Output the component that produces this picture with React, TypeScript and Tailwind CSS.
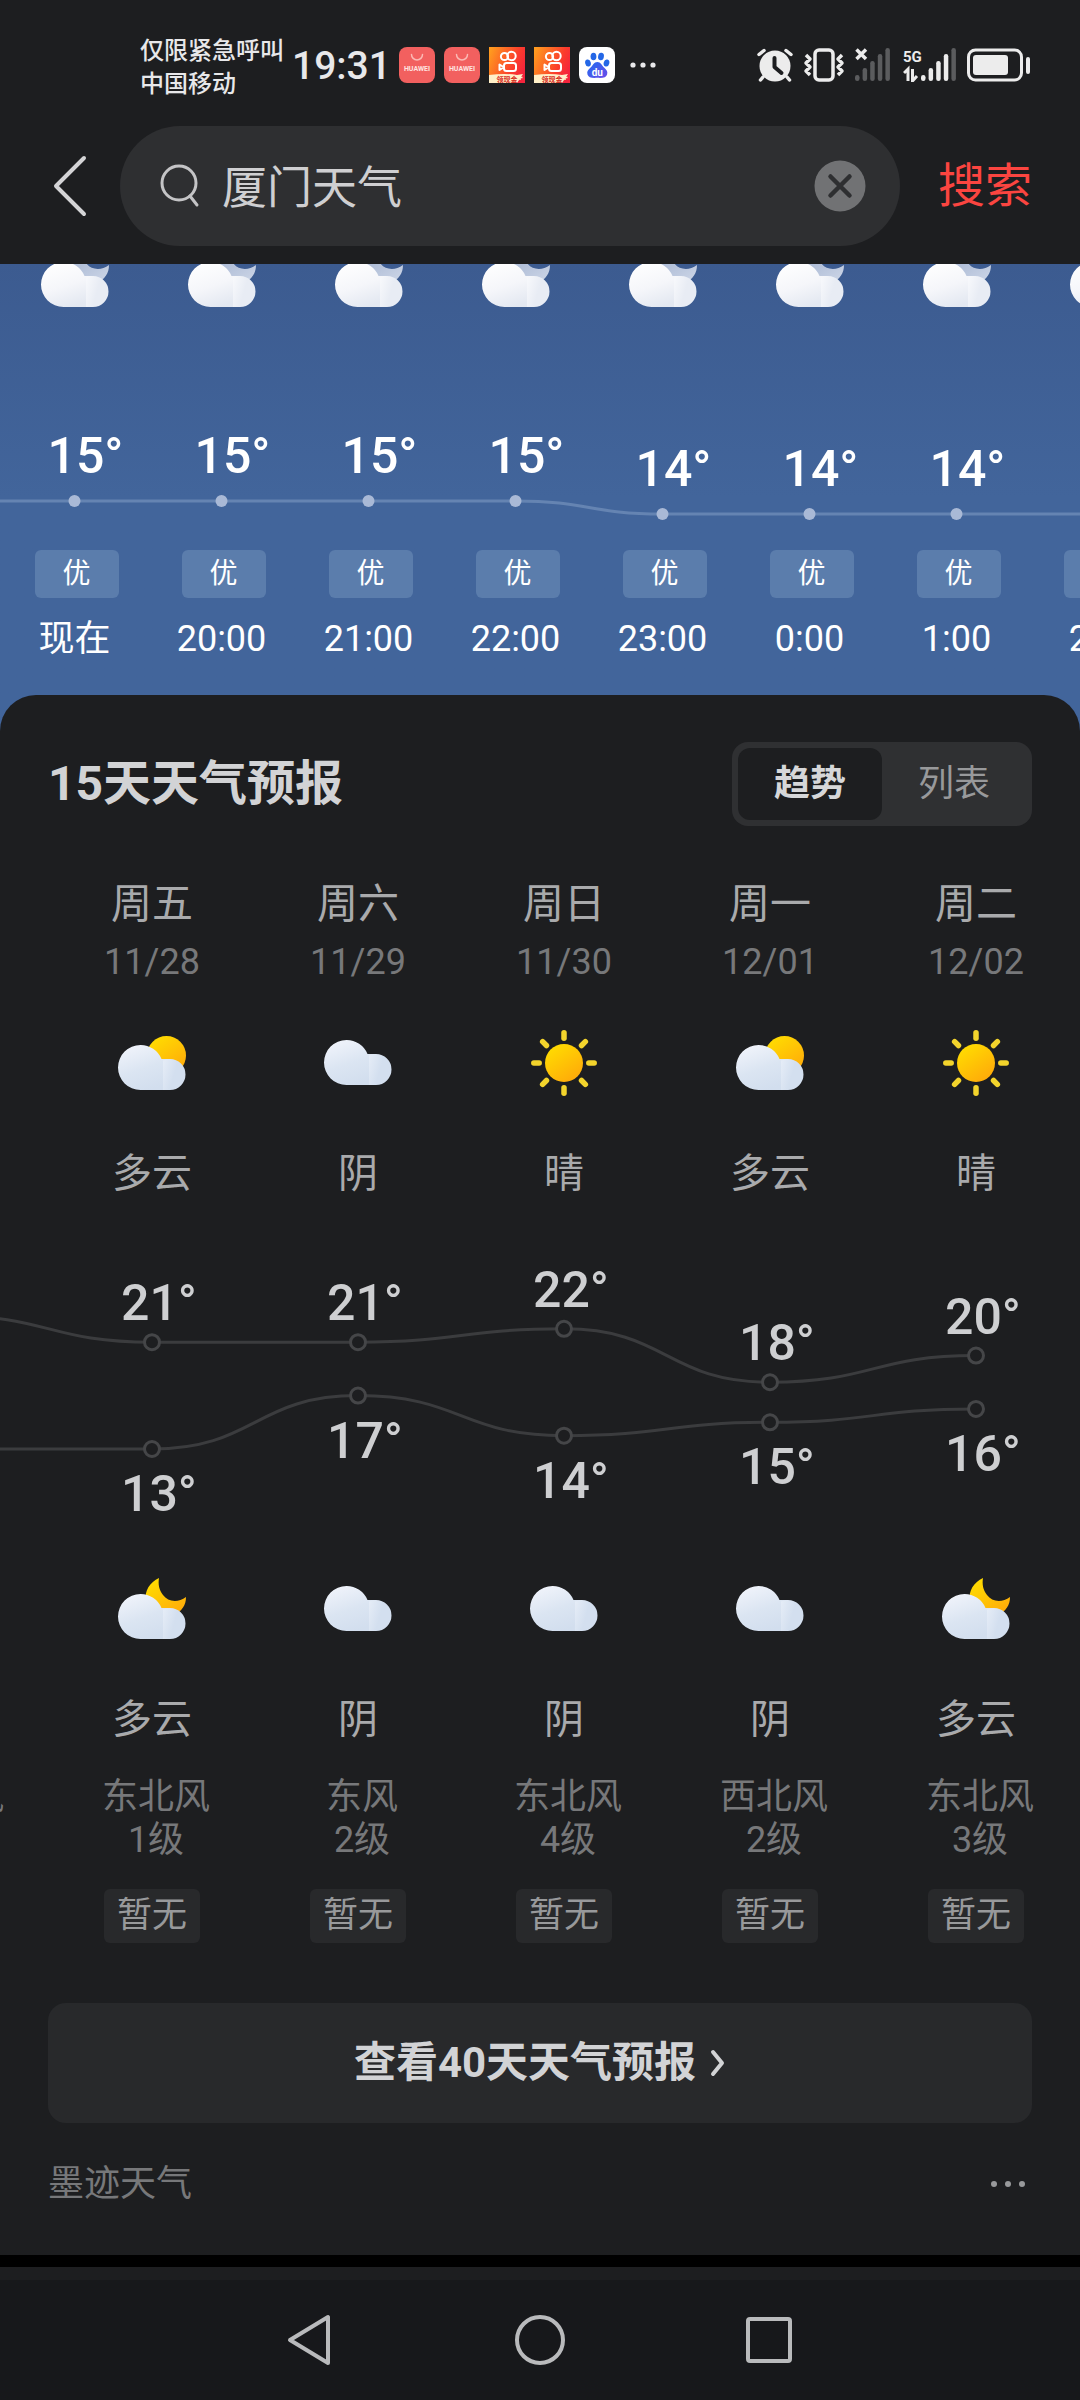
import { useId, useState, type ReactNode } from 'react'

type Icon = 'partly' | 'overcast' | 'sunny' | 'night'

const hours = [
  { time: '现在', temp: 15 },
  { time: '20:00', temp: 15 },
  { time: '21:00', temp: 15 },
  { time: '22:00', temp: 15 },
  { time: '23:00', temp: 14 },
  { time: '0:00', temp: 14 },
  { time: '1:00', temp: 14 },
  { time: '2:00', temp: 14 },
]

interface Day {
  week: string
  date: string
  day: Icon
  dayText: string
  high: number
  low: number
  night: Icon
  nightText: string
  wind: string
  level: string
}

const days: Day[] = [
  { week: '周四', date: '11/27', day: 'sunny', dayText: '晴', high: 23, low: 13, night: 'night', nightText: '多云', wind: '东北风', level: '2级' },
  { week: '周五', date: '11/28', day: 'partly', dayText: '多云', high: 21, low: 13, night: 'night', nightText: '多云', wind: '东北风', level: '1级' },
  { week: '周六', date: '11/29', day: 'overcast', dayText: '阴', high: 21, low: 17, night: 'overcast', nightText: '阴', wind: '东风', level: '2级' },
  { week: '周日', date: '11/30', day: 'sunny', dayText: '晴', high: 22, low: 14, night: 'overcast', nightText: '阴', wind: '东北风', level: '4级' },
  { week: '周一', date: '12/01', day: 'partly', dayText: '多云', high: 18, low: 15, night: 'overcast', nightText: '阴', wind: '西北风', level: '2级' },
  { week: '周二', date: '12/02', day: 'sunny', dayText: '晴', high: 20, low: 16, night: 'night', nightText: '多云', wind: '东北风', level: '3级' },
]

const HOUR_W = 147
const DAY_W = 206

// 平滑曲线，每个点处切线水平
function smoothPath(points: [number, number][]) {
  return points
    .map(([x, y], i) => {
      if (i === 0) return `M${x} ${y}`
      const [px, py] = points[i - 1]
      const mid = (px + x) / 2
      return `C${mid} ${py} ${mid} ${y} ${x} ${y}`
    })
    .join('')
}

function Cloud({ id, y, light }: { id: string; y: number; light?: boolean }) {
  return (
    <g transform={`translate(0 ${y})`}>
      <defs>
        <linearGradient id={id} x1="0.2" y1="0" x2="0.6" y2="1">
          <stop offset="0" stopColor={light ? '#ffffff' : '#f1f4fb'} />
          <stop offset="0.55" stopColor={light ? '#f5f6fa' : '#dbe5f2'} />
          <stop offset="1" stopColor={light ? '#e3e8f1' : '#d2deee'} />
        </linearGradient>
        <linearGradient id={`${id}s`} x1="0" y1="0" x2="1" y2="0.4">
          <stop offset="0" stopColor={light ? '#f8f9fc' : '#e6edf7'} />
          <stop offset="0.6" stopColor={light ? '#e8ecf4' : '#d3dfef'} />
        </linearGradient>
      </defs>
      <path d="M22.500 0A22.500 22.500 0 0 0 22.500 45H52V14H43.500A22.500 22.500 0 0 0 22.500 0Z" fill={`url(#${id})`} />
      <path d="M45 15.600A15.500 15.500 0 0 1 52 14A15.500 15.500 0 0 1 52 45H45Z" fill={`url(#${id}s)`} />
    </g>
  )
}

function WeatherIcon({ name, pale }: { name: Icon; pale?: boolean }) {
  const id = useId()
  const gold = `${id}g`
  return (
    <svg viewBox="0 0 68 66" className="h-[66px] w-[68px]" aria-hidden="true">
      <defs>
        <linearGradient id={gold} x1="0.1" y1="0" x2="0.8" y2="1">
          <stop offset="0" stopColor={pale ? '#9fb0cf' : '#ffe000'} />
          <stop offset="1" stopColor={pale ? '#ccd5e6' : '#ffa80a'} />
        </linearGradient>
      </defs>
      {name === 'sunny' && (
        <>
          <circle cx="34" cy="33" r="19" fill={`url(#${gold})`} />
          {[0, 45, 90, 135, 180, 225, 270, 315].map(deg => (
            <path key={deg} d="M34 2.800V8.200" stroke="#f3d42c" strokeWidth="5.500" strokeLinecap="round" transform={`rotate(${deg} 34 33)`} />
          ))}
        </>
      )}
      {name === 'overcast' && <Cloud id={id} y={10} />}
      {name === 'partly' && (
        <>
          <circle cx="48.500" cy="25.500" r="19.500" fill={`url(#${gold})`} />
          <Cloud id={id} y={15} />
        </>
      )}
      {name === 'night' && (
        <>
          <path d="M41 2C32 6 26 15 28 25C30 37 44 45 56 39C64 35 68 29 68 21C60 27 50 26 45 19C41 14 40 8 41 2Z" fill={`url(#${gold})`} />
          <Cloud id={id} y={18} light={pale} />
        </>
      )}
    </svg>
  )
}

function HuaweiIcon() {
  return (
    <svg viewBox="0 0 36 36" className="size-9" aria-hidden="true">
      <rect width="36" height="36" rx="8" fill="#f2605f" />
      <path d="M12.500 7.500a5.500 5.500 0 0 0 11 0" fill="none" stroke="#fbb9b4" strokeWidth="1.500" strokeLinecap="round" />
      <text x="18" y="24" textAnchor="middle" fontSize="7" fontWeight="700" fill="#ffe3e0">HUAWEI</text>
    </svg>
  )
}

function KuaishouIcon() {
  const id = useId()
  return (
    <svg viewBox="0 0 36 36" className="size-9" aria-hidden="true">
      <defs>
        <linearGradient id={id} x1="0" y1="0.200" x2="1" y2="0.600">
          <stop offset="0" stopColor="#ff9a1f" />
          <stop offset="0.700" stopColor="#fb3c2c" />
          <stop offset="1" stopColor="#f5243c" />
        </linearGradient>
      </defs>
      <rect width="36" height="36" fill={`url(#${id})`} />
      <g fill="none" stroke="#fff" strokeWidth="2">
        <circle cx="15.500" cy="9.500" r="3.600" />
        <circle cx="22.500" cy="9" r="4.200" />
        <rect x="15" y="16" width="12" height="8" rx="2.500" />
        <path d="M14.500 20l-4-2.500v5.500l4-2.500" strokeLinejoin="round" />
      </g>
      <path d="M0 28Q16 26 28 28L34 27L28 36H0Z" fill="#fff0c8" />
      <text x="18" y="35" textAnchor="middle" fontSize="7" fontWeight="700" fill="#d62a1c">领现金</text>
      <path d="M31 28v5M28.500 30.500h5" stroke="#fff0c8" strokeWidth="1.500" />
    </svg>
  )
}

function BaiduIcon() {
  const id = useId()
  return (
    <svg viewBox="0 0 36 36" className="size-9" aria-hidden="true">
      <defs>
        <linearGradient id={id} x1="0" y1="0" x2="1" y2="1">
          <stop offset="0" stopColor="#1f6cf0" />
          <stop offset="1" stopColor="#6a4be8" />
        </linearGradient>
      </defs>
      <rect width="36" height="36" rx="8" fill="#fff" />
      <g fill="#2467e6">
        <ellipse cx="9" cy="16" rx="2.800" ry="3.600" transform="rotate(-15 9 16)" />
        <ellipse cx="14.500" cy="9.500" rx="2.900" ry="3.800" />
        <ellipse cx="22" cy="9.500" rx="2.900" ry="3.800" transform="rotate(10 22 9.500)" />
        <ellipse cx="27.500" cy="16" rx="2.800" ry="3.600" transform="rotate(15 27.500 16)" />
      </g>
      <path d="M18.300 15c3.500 0 4.500 3.600 7 5.800 2.600 2.300 3.600 4 2.800 6.700-.900 3-4 3.700-9.800 3.300-5.800.400-8.900-.300-9.800-3.300-.800-2.700.200-4.400 2.800-6.700 2.500-2.200 3.500-5.800 7-5.800Z" fill={`url(#${id})`} />
      <text x="18.300" y="28.500" textAnchor="middle" fontSize="10" fontWeight="700" fill="#fff">du</text>
    </svg>
  )
}

function Signal({ active }: { active: number }) {
  const heights = [6, 13, 20, 27, 33]
  return (
    <g>
      {heights.map((h, i) => (
        <rect key={h} x={i * 7.6} y={33 - h} width="4.500" height={h} rx="2.200" fill={i < active ? '#ececec' : '#5b5c5e'} />
      ))}
    </g>
  )
}

function StatusBar() {
  return (
    <div className="flex h-[126px] items-center justify-between pt-1 pr-[49px] pl-[140px] text-[#e8e8ea]">
      <div className="flex items-center">
        <p className="pt-1.5 text-2xl leading-[33px] font-medium whitespace-nowrap">
          仅限紧急呼叫
          <br />
          中国移动
        </p>
        <time className="ml-2 pt-0.5 text-[39px] leading-none font-medium">19:31</time>
        <div className="ml-2 flex items-center gap-[9px]">
          <HuaweiIcon />
          <HuaweiIcon />
          <KuaishouIcon />
          <KuaishouIcon />
          <BaiduIcon />
        </div>
        <svg viewBox="0 0 28 6" className="ml-3.5 h-[6px] w-7" fill="currentColor" aria-hidden="true">
          <circle cx="4" cy="3" r="2.600" />
          <circle cx="14" cy="3" r="2.600" />
          <circle cx="24" cy="3" r="2.600" />
        </svg>
      </div>
      <div className="flex items-center">
        <svg viewBox="0 0 36 34" className="h-[34px] w-9" aria-hidden="true">
          <circle cx="18" cy="18" r="15.500" fill="#ececec" />
          <path d="M2 6.500L7 2.500M34 6.500L29 2.500M6 29L3.500 32M30 29L32.500 32" stroke="#ececec" strokeWidth="3.500" strokeLinecap="round" />
          <path d="M17.500 10V19L24.500 25" fill="none" stroke="#1d1e20" strokeWidth="4" strokeLinecap="round" strokeLinejoin="round" />
        </svg>
        <svg viewBox="0 0 42 34" className="ml-[10px] h-[34px] w-[42px]" fill="none" stroke="#ececec" aria-hidden="true">
          <rect x="12" y="2" width="18" height="30" rx="4" strokeWidth="3.500" />
          <path d="M3 7l4 4-4 4 4 4-4 4 4 4M39 7l-4 4 4 4-4 4 4 4-4 4" strokeWidth="3.500" strokeLinejoin="round" />
        </svg>
        <svg viewBox="0 0 36 34" className="ml-[10px] h-[34px] w-9" aria-hidden="true">
          <Signal active={0} />
          <path d="M1.500 1.500L11 11M11 1.500L1.500 11" stroke="#ececec" strokeWidth="3.500" />
        </svg>
        <svg viewBox="0 0 54 34" className="ml-3 h-[34px] w-[54px]" aria-hidden="true">
          <g transform="translate(18 0)">
            <Signal active={4} />
          </g>
          <text x="0" y="14" fontSize="15" fontWeight="700" fill="#ececec">5G</text>
          <path d="M1 25L5 21V33M9.500 21V33L14 28" fill="none" stroke="#ececec" strokeWidth="3" />
        </svg>
        <svg viewBox="0 0 64 34" className="ml-[10px] h-[34px] w-16" aria-hidden="true">
          <rect x="1.500" y="2" width="53" height="30" rx="7" fill="none" stroke="#ececec" strokeWidth="3" />
          <rect x="6" y="7" width="35" height="20" rx="3" fill="#ececec" />
          <rect x="59" y="9" width="4" height="17" rx="2" fill="#ececec" />
        </svg>
      </div>
    </div>
  )
}

function SearchBar() {
  const [keyword, setKeyword] = useState('厦门天气')
  return (
    <form className="flex items-center px-12 pb-[18px]" onSubmit={e => e.preventDefault()}>
      <button type="button" aria-label="返回" className="w-[72px] shrink-0">
        <svg viewBox="0 0 44 64" className="h-16 w-11" fill="none" stroke="#d4d4d6" strokeWidth="4" strokeLinecap="round" strokeLinejoin="round">
          <path d="M36 4L8 32L36 60" />
        </svg>
      </button>
      <div className="flex h-[120px] flex-1 items-center rounded-full bg-[#2e2f31] pr-[34px] pl-10">
        <svg viewBox="0 0 40 44" className="h-11 w-10 shrink-0" fill="none" stroke="#c4c4c6" strokeWidth="3" strokeLinecap="round" aria-hidden="true">
          <circle cx="19" cy="19" r="17" />
          <path d="M30 32L37 41" />
        </svg>
        <input
          aria-label="搜索"
          value={keyword}
          onChange={e => setKeyword(e.target.value)}
          className="ml-[22px] min-w-0 flex-1 bg-transparent pt-1.5 text-[45px] leading-[64px] text-[#cfcfd1] outline-none"
        />
        <button type="button" aria-label="清除" onClick={() => setKeyword('')} className="shrink-0">
          <svg viewBox="0 0 52 52" className="size-[52px]">
            <circle cx="26" cy="26" r="25.500" fill="#717274" />
            <path d="M16.500 16.500L35.500 35.500M35.500 16.500L16.500 35.500" stroke="#2e2f31" strokeWidth="4.500" strokeLinecap="round" />
          </svg>
        </button>
      </div>
      <button type="submit" className="ml-[38px] shrink-0 text-[47px] leading-[64px] text-[#fb4540]">搜索</button>
    </form>
  )
}

function HourlyForecast() {
  const points = hours.map((h, i) => [i * HOUR_W + HOUR_W / 2, (15 - h.temp) * 13 + 81] as [number, number])
  const width = hours.length * HOUR_W
  // 曲线向左延伸到屏幕边缘
  const line: [number, number][] = [[-HOUR_W / 2, 81], ...points, [width, points[points.length - 1][1]]]
  return (
    <section className="overflow-hidden bg-linear-to-b from-[#3c5b90] to-[#42659b] to-50% pb-[67px] pl-px">
      <div style={{ width }}>
        <ul className="-mt-5 flex">
          {hours.map(h => (
            <li key={h.time} className="flex flex-1 justify-center">
              <WeatherIcon name="night" pale />
            </li>
          ))}
        </ul>
        <svg viewBox={`0 0 ${width} 130`} width={width} height={130} className="mt-[110px] overflow-visible">
          <path d={smoothPath(line)} fill="none" stroke="#6584b2" strokeWidth="3" />
          {points.map(([x, y], i) => (
            <g key={i}>
              <circle cx={x} cy={y} r="6" fill="#a9b9d6" />
              <text x={x - 27} y={y - 28} fontSize="50" fontWeight="500" fill="#ffffff">{hours[i].temp}°</text>
            </g>
          ))}
        </svg>
        <ul className="flex">
          {hours.map(h => (
            <li key={h.time} className="flex flex-1 flex-col items-center text-white">
              <span className="ml-1 h-12 w-[84px] rounded-md bg-[#5b7dac] text-center text-[28px] leading-[48px]">优</span>
              <span className="mt-4 text-[36px] leading-[50px]">{h.time}</span>
            </li>
          ))}
        </ul>
      </div>
    </section>
  )
}

function TempChart() {
  const width = days.length * DAY_W
  const toY = (t: number) => 157 - (t - 13) * 13.35
  const highs = days.map((d, i) => [i * DAY_W + DAY_W / 2, toY(d.high)] as [number, number])
  const lows = days.map((d, i) => [i * DAY_W + DAY_W / 2, toY(d.low)] as [number, number])
  const series = [
    { points: highs, temps: days.map(d => d.high), dy: -22 },
    { points: lows, temps: days.map(d => d.low), dy: 62 },
  ]
  return (
    <svg viewBox={`0 0 ${width} 230`} width={width} height={230} className="overflow-visible">
      {series.map(({ points, temps, dy }) => (
        <g key={dy}>
          <path d={smoothPath(points)} fill="none" stroke="#3b3c3e" strokeWidth="3" />
          {points.map(([x, y], i) => (
            <g key={i}>
              <circle cx={x} cy={y} r="7.500" fill="#1d1e20" stroke="#454648" strokeWidth="3" />
              <text x={x - 31} y={y + dy} fontSize="50" fontWeight="500" fill="#cecfd1">{temps[i]}°</text>
            </g>
          ))}
        </g>
      ))}
    </svg>
  )
}

function DailyForecast() {
  const [mode, setMode] = useState<'trend' | 'list'>('trend')
  const tab = (value: 'trend' | 'list', label: ReactNode) => (
    <button
      type="button"
      aria-pressed={mode === value}
      onClick={() => setMode(value)}
      className={`h-[72px] w-36 rounded-xl text-[36px] leading-[68px] ${
        mode === value ? 'bg-[#1d1e20] font-bold text-[#d6d7d9]' : 'text-[#98999b]'
      }`}
    >
      {label}
    </button>
  )
  return (
    <section className="relative -mt-9 rounded-t-[36px] bg-[#1d1e20] pt-[47px] pb-[45px]">
      <div className="flex items-center justify-between px-12">
        <h2 className="text-[48px] leading-[84px] font-bold text-[#d2d3d5]">15天天气预报</h2>
        <div className="flex rounded-2xl bg-[#2f3032] p-[6px]">
          {tab('trend', '趋势')}
          {tab('list', '列表')}
        </div>
      </div>

      <div className="overflow-hidden">
        <div className="-ml-[157px]" style={{ width: days.length * DAY_W }}>
          <ul className="mt-[50px] flex">
            {days.map(d => (
              <li key={d.date} className="flex flex-1 flex-col items-center text-[#a9aaac]">
                <span className="text-[41px] leading-[56px]">{d.week}</span>
                <span className="mt-1.5 text-[36px] leading-[48px] text-[#77787a]">{d.date}</span>
                <span className="mt-11">
                  <WeatherIcon name={d.day} />
                </span>
                <span className="mt-[50px] text-[40px] leading-[56px]">{d.dayText}</span>
              </li>
            ))}
          </ul>
          <div className="mt-[90px]">
            <TempChart />
          </div>
          <ul className="mt-[54px] flex">
            {days.map(d => (
              <li key={d.date} className="flex flex-1 flex-col items-center text-[#a9aaac]">
                <WeatherIcon name={d.night} />
                <span className="mt-[50px] text-[40px] leading-[56px]">{d.nightText}</span>
                <span className="mt-7 ml-2 text-[36px] leading-[43px] text-[#77787a]">{d.wind}</span>
                <span className="ml-2 text-[36px] leading-[43px] text-[#77787a]">{d.level}</span>
                <span className="mt-[27px] h-[54px] w-24 rounded-md bg-[#28292b] text-center text-[35px] leading-[54px] text-[#98999b]">暂无</span>
              </li>
            ))}
          </ul>
        </div>
      </div>

      <div className="mt-[60px] px-12">
        <button type="button" className="flex h-[120px] w-full items-center justify-center gap-[14px] rounded-[18px] bg-[#28292b] text-[42px] leading-[56px] font-bold text-[#d2d3d5]">
          查看40天天气预报
          <svg viewBox="0 0 16 28" className="h-7 w-4" fill="none" stroke="currentColor" strokeWidth="4" strokeLinecap="round" strokeLinejoin="round" aria-hidden="true">
            <path d="M3 3L12 14L3 25" />
          </svg>
        </button>
        <div className="mt-[35px] flex items-center justify-between text-[#77787a]">
          <span className="text-[36px] leading-[52px]">墨迹天气</span>
          <button type="button" aria-label="更多" className="mr-[6px]">
            <svg viewBox="0 0 36 8" className="h-2 w-9" fill="#98999b">
              <circle cx="4" cy="4" r="3" />
              <circle cx="18" cy="4" r="3" />
              <circle cx="32" cy="4" r="3" />
            </svg>
          </button>
        </div>
      </div>
    </section>
  )
}

function NavBar() {
  return (
    <nav className="flex h-[120px] items-center justify-center gap-[177px] bg-[#17181b]">
      <button type="button" aria-label="返回">
        <svg viewBox="0 0 52 52" className="size-[52px]" fill="none" stroke="#b9babc" strokeWidth="4" strokeLinejoin="round">
          <path d="M43 3V49L5 26Z" />
        </svg>
      </button>
      <button type="button" aria-label="主页">
        <svg viewBox="0 0 52 52" className="size-[52px]" fill="none" stroke="#b9babc" strokeWidth="4">
          <circle cx="26" cy="26" r="23" />
        </svg>
      </button>
      <button type="button" aria-label="最近任务">
        <svg viewBox="0 0 52 52" className="size-[52px]" fill="none" stroke="#b9babc" strokeWidth="4">
          <rect x="5" y="5" width="42" height="42" rx="2" />
        </svg>
      </button>
    </nav>
  )
}

export default function App() {
  return (
    <div className="min-h-screen bg-[#1d1e20] font-['Roboto','Noto_Sans_CJK_SC',sans-serif]">
      <header>
        <StatusBar />
        <SearchBar />
      </header>
      <main>
        <HourlyForecast />
        <DailyForecast />
      </main>
      <div className="h-3 bg-black" />
      <div className="h-[13px]" />
      <NavBar />
    </div>
  )
}
